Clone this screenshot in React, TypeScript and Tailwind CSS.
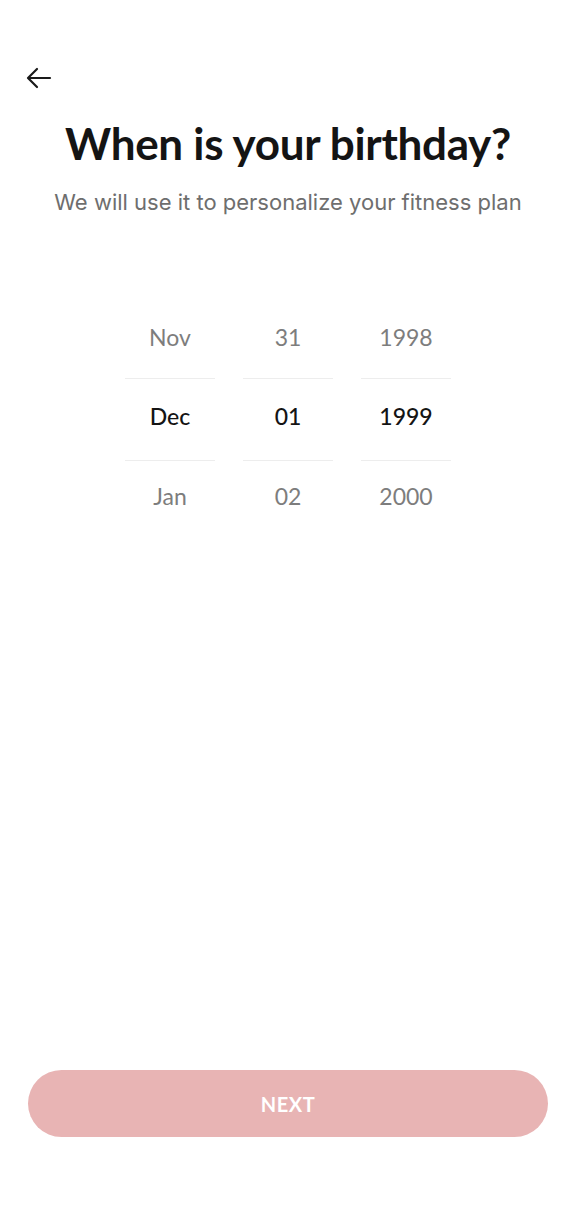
import React from "react";

const months = ["Nov", "Dec", "Jan"];
const days = ["31", "01", "02"];
const years = ["1998", "1999", "2000"];

function Column({ items }: { items: string[] }) {
  return (
    <div className="flex w-[90px] flex-col">
      <div className="flex h-[77px] items-center justify-center pb-[4px] text-[23px] text-[#7d7d7d]">{items[0]}</div>
      <div className="flex h-[83px] items-center justify-center border-y border-[#ededed] pb-[6px] text-[23px] font-medium text-[#141414]">{items[1]}</div>
      <div className="flex h-[72px] items-center justify-center pb-[2px] text-[23px] text-[#7d7d7d]">{items[2]}</div>
    </div>
  );
}

export default function App() {
  return (
    <div className="flex h-[1216px] w-[576px] flex-col bg-white" style={{ fontFamily: "Lato, 'Noto Sans', sans-serif" }}>
      <div className="px-[26px] pt-[66px]">
        <svg width="26" height="24" viewBox="0 0 26 24" fill="none" stroke="#1a1a1a" strokeWidth="2.2" strokeLinecap="round" strokeLinejoin="round">
          <path d="M24 12H3" />
          <path d="M11 3L2 12l9 9" />
        </svg>
      </div>
      <h1 className="mt-[23px] text-center text-[44px] font-bold leading-[60px] tracking-[-0.3px] text-[#141414]">When is your birthday?</h1>
      <p className="mt-[14px] text-center text-[22px] leading-[30px] text-[#6e6e6e]" style={{ fontFamily: "Inter, sans-serif" }}>
        We will use it to personalize your fitness plan
      </p>
      <div className="mt-[84px] flex justify-center gap-[28px]">
        <Column items={months} />
        <Column items={days} />
        <Column items={years} />
      </div>
      <div className="flex-1" />
      <div className="px-[28px] pb-[79px]">
        <button className="flex h-[67px] w-full items-center justify-center rounded-full bg-[#e8b4b4] text-[20px] font-bold tracking-[0.5px] text-white">
          NEXT
        </button>
      </div>
    </div>
  );
}
